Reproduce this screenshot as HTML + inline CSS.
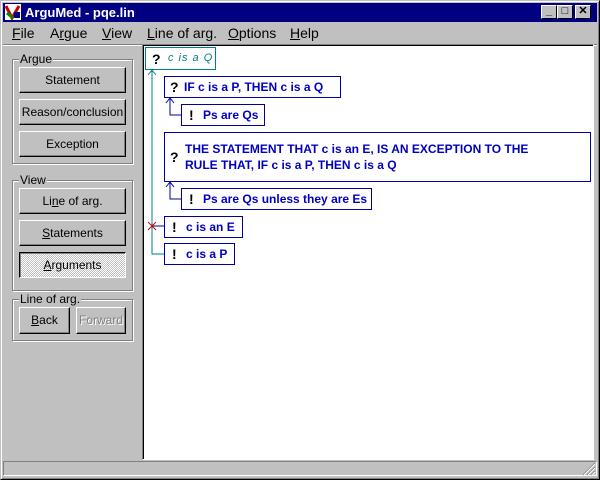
<!DOCTYPE html>
<html><head><style>
*{margin:0;padding:0;box-sizing:border-box}
body{width:600px;height:480px;background:#c0c0c0;font-family:"Liberation Sans",Arial,sans-serif;font-size:12px;position:relative;overflow:hidden}
.a{position:absolute}
.btn{position:absolute;background:#c0c0c0;border:1px solid;border-color:#fff #000 #000 #fff;box-shadow:inset -1px -1px 0 #808080;text-align:center;font-size:12px;color:#000}
.grp{position:absolute;border:1px solid #808080;box-shadow:1px 1px 0 #fff, inset 1px 1px 0 #fff}
.gl{position:absolute;top:-8px;left:6px;background:#c0c0c0;padding:0 1px;font-size:12px}
.box{position:absolute;border:1px solid #0000a0;background:#fff;color:#0000c0;font-weight:bold;font-size:12px;white-space:nowrap}
.box b{color:#000;font-size:14px;position:absolute}
.box span{position:absolute}
.tb{position:absolute;top:5px;width:16px;height:14px;background:#c0c0c0;border:1px solid;border-color:#fff #000 #000 #fff;font-size:11px;font-weight:bold;text-align:center;line-height:11px}
</style></head><body>
<div class="a" style="left:0;top:0;width:600px;height:480px;border:1px solid;border-color:#c0c0c0 #000 #000 #c0c0c0;box-shadow:inset 1px 1px 0 #fff,inset -1px -1px 0 #808080"></div>
<div class="a" style="left:3px;top:3px;width:594px;height:19px;background:#000080"></div>
<svg class="a" style="left:5px;top:4px" width="16" height="16"><rect width="16" height="16" fill="#fff"/><path d="M1 2 L7 14 L14 2" stroke="#c00" stroke-width="3" fill="none"/><path d="M2 9 L8 14" stroke="#080" stroke-width="3"/><rect x="9" y="8" width="6" height="6" fill="#008"/></svg>
<div class="a" style="left:25px;top:5px;color:#fff;font-weight:bold;font-size:13px">ArguMed - pqe.lin</div>
<div class="tb" style="left:541px">_</div>
<div class="tb" style="left:557px">□</div>
<div class="tb" style="left:575px">✕</div>
<div class="a" style="top:25px;left:0;font-size:14px;white-space:nowrap">
<span class="a" style="left:12px"><u>F</u>ile</span><span class="a" style="left:50px">A<u>r</u>gue</span><span class="a" style="left:102px"><u>V</u>iew</span><span class="a" style="left:147px"><u>L</u>ine of arg.</span><span class="a" style="left:228px"><u>O</u>ptions</span><span class="a" style="left:290px"><u>H</u>elp</span></div>
<div class="a" style="left:3px;top:44px;width:594px;height:1px;background:#808080"></div>
<div class="a" style="left:3px;top:45px;width:594px;height:1px;background:#fff"></div>

<div class="grp" style="left:12px;top:59px;width:121px;height:105px"><div class="gl">Argue</div></div>
<div class="btn" style="left:19px;top:67px;width:107px;height:26px;line-height:24px">Statement</div>
<div class="btn" style="left:19px;top:99px;width:107px;height:26px;line-height:24px">Reason/conclusion</div>
<div class="btn" style="left:19px;top:131px;width:107px;height:26px;line-height:24px">Exception</div>
<div class="grp" style="left:12px;top:180px;width:121px;height:111px"><div class="gl">View</div></div>
<div class="btn" style="left:19px;top:188px;width:107px;height:26px;line-height:24px">Li<u>n</u>e of arg.</div>
<div class="btn" style="left:19px;top:220px;width:107px;height:26px;line-height:24px"><u>S</u>tatements</div>
<div class="btn" style="left:19px;top:252px;width:107px;height:26px;line-height:24px;border-color:#000 #fff #fff #000;box-shadow:inset 1px 1px 0 #808080;background:repeating-conic-gradient(#fff 0 25%,#c0c0c0 0 50%) 0 0/2px 2px"><u>A</u>rguments</div>
<div class="grp" style="left:12px;top:299px;width:121px;height:42px"><div class="gl">Line of arg.</div></div>
<div class="btn" style="left:19px;top:307px;width:51px;height:27px;line-height:25px"><u>B</u>ack</div>
<div class="btn" style="left:76px;top:307px;width:50px;height:27px;line-height:25px;color:#808080;text-shadow:1px 1px 0 #fff">Forward</div>

<div class="a" style="left:142px;top:44px;width:452px;height:416px;background:#fff;border:1px solid;border-color:#808080 #fff #fff #808080;box-shadow:inset 1px 1px 0 #000"></div>

<svg class="a" style="left:0;top:0" width="600" height="480">
<g stroke="#008080" fill="none"><path d="M152 70 V254 H164"/><path d="M148 75 L152 70 L156 75"/></g>
<g stroke="#0000a0" fill="none"><path d="M170 98 V115 H181"/><path d="M166 103 L170 98 L174 103"/><path d="M170 182 V199 H181"/><path d="M166 187 L170 182 L174 187"/><path d="M152 226 H164"/></g>
<path d="M148 222 L156 230 M156 222 L148 230" stroke="#c00"/>
</svg>

<div class="box" style="left:145px;top:47px;width:71px;height:23px;border-color:#008080"><b style="left:6px;top:3px">?</b><span style="left:22px;top:4px;color:#008080;font-weight:normal;font-style:italic;font-size:11px;letter-spacing:1px">c is a Q</span></div>
<div class="box" style="left:164px;top:76px;width:177px;height:22px"><b style="left:5px;top:2px">?</b><span style="left:19px;top:3px">IF c is a P, THEN c is a Q</span></div>
<div class="box" style="left:181px;top:104px;width:84px;height:22px"><b style="left:7px;top:2px">!</b><span style="left:21px;top:3px">Ps are Qs</span></div>
<div class="box" style="left:164px;top:132px;width:427px;height:50px"><b style="left:5px;top:16px">?</b><span style="left:20px;top:8px;line-height:16px">THE STATEMENT THAT c is an E, IS AN EXCEPTION TO THE<br>RULE THAT, IF c is a P, THEN c is a Q</span></div>
<div class="box" style="left:181px;top:188px;width:191px;height:22px"><b style="left:7px;top:2px">!</b><span style="left:21px;top:3px">Ps are Qs unless they are Es</span></div>
<div class="box" style="left:164px;top:216px;width:79px;height:22px"><b style="left:7px;top:2px">!</b><span style="left:21px;top:3px">c is an E</span></div>
<div class="box" style="left:164px;top:243px;width:71px;height:22px"><b style="left:7px;top:2px">!</b><span style="left:21px;top:3px">c is a P</span></div>

<div class="a" style="left:3px;top:461px;width:594px;height:15px;border:1px solid;border-color:#808080 #fff #fff #808080"></div>
<svg class="a" style="left:582px;top:462px" width="14" height="14"><path d="M13 1 L1 13 M13 5 L5 13 M13 9 L9 13" stroke="#808080"/><path d="M13 2 L2 13 M13 6 L6 13 M13 10 L10 13" stroke="#fff"/></svg>
</body></html>
